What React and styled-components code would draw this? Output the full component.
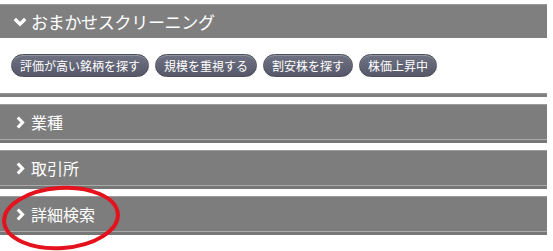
import styled, { createGlobalStyle } from "styled-components";

const GlobalStyle = createGlobalStyle`
  body {
    margin: 0;
    background: #ffffff;
    font-family: "Noto Sans CJK JP", "Noto Sans", sans-serif;
  }
`;

const sections = ["業種", "取引所", "詳細検索"];
const chips = ["評価が高い銘柄を探す", "規模を重視する", "割安株を探す", "株価上昇中"];

const ChevronDown = () => (
  <svg width="14" height="10" viewBox="0 0 14 10">
    <polyline points="1.8,2 7,7.2 12.2,2" fill="none" stroke="#fff" strokeWidth="3.4" />
  </svg>
);

const ChevronRight = () => (
  <svg width="9" height="13" viewBox="0 0 9 13">
    <polyline points="1.8,1.5 6.5,6.5 1.8,11.5" fill="none" stroke="#fff" strokeWidth="3.2" />
  </svg>
);

const App = () => {
  return (
    <Page>
      <GlobalStyle />
      <Header>
        <ChevronDown />
        <span>おまかせスクリーニング</span>
      </Header>
      <ChipRow>
        {chips.map((c) => (
          <Chip key={c}>{c}</Chip>
        ))}
      </ChipRow>
      <Divider />
      <SectionList>
        {sections.map((s) => (
          <Section key={s}>
            <SectionHead>
              <ChevronRight />
              <span>{s}</span>
            </SectionHead>
          </Section>
        ))}
        <Circle width="124" height="70" viewBox="0 0 124 70">
          <ellipse
            cx="61"
            cy="34"
            rx="57"
            ry="30"
            fill="none"
            stroke="#e4121c"
            strokeWidth="4"
            transform="rotate(-4 61 34)"
          />
        </Circle>
      </SectionList>
    </Page>
  );
};

export default App;

const Page = styled.div`
  width: 547px;
  min-height: 247px;
  padding-top: 4px;
`;

const Header = styled.div`
  height: 33px;
  border-top: 1px solid #9a9a9a;
  background: #7f7f7f;
  color: #fff;
  display: flex;
  align-items: center;
  gap: 4px;
  padding-left: 13px;
  font-size: 17px;
  letter-spacing: -0.3px;
`;

const ChipRow = styled.div`
  display: flex;
  gap: 6px;
  padding: 16px 0 0 11px;
  height: 39px;
`;

const Chip = styled.div`
  height: 23px;
  box-sizing: border-box;
  padding: 0 8px;
  border-radius: 12px;
  border: 1px solid #4c4e5a;
  background: linear-gradient(#6f7283, #565869);
  box-shadow: inset 0 1px 0 rgba(255, 255, 255, 0.25);
  color: #fff;
  font-size: 12px;
  line-height: 21px;
  white-space: nowrap;
`;

const Divider = styled.div`
  height: 3px;
  background: #808080;
  border-top: 1px solid #999;
`;

const SectionList = styled.div`
  position: relative;
  display: flex;
  flex-direction: column;
  gap: 7px;
  padding-top: 7px;
`;

const Section = styled.div`
  background: #777;
  padding-bottom: 3px;
`;

const SectionHead = styled.div`
  height: 34px;
  border-top: 1px solid #9c9c9c;
  border-bottom: 1px solid #a9a9a9;
  background: #7d7d7d;
  color: #fff;
  display: flex;
  align-items: center;
  gap: 6px;
  padding-left: 16px;
  font-size: 16px;
`;

const Circle = styled.svg`
  position: absolute;
  left: 0;
  top: 87px;
`;
